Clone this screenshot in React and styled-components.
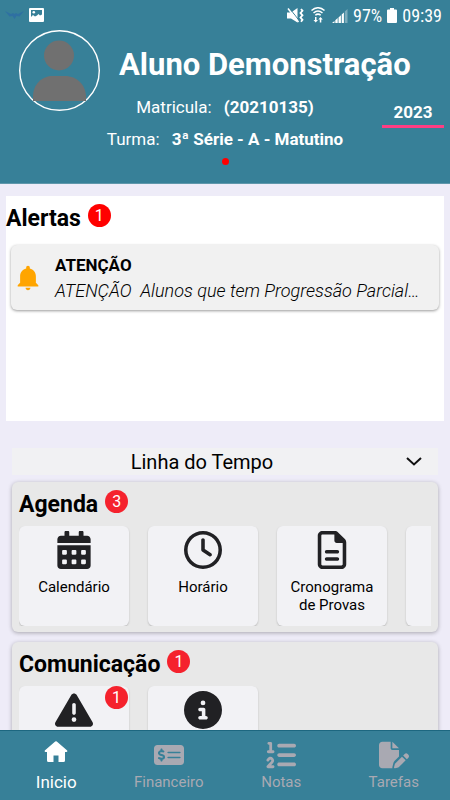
import React from "react";
import styled, { createGlobalStyle } from "styled-components";
import { FaCalendarAlt } from "react-icons/fa";
import {
  FaRegClock,
  FaRegFileLines,
  FaTriangleExclamation,
  FaCircleInfo,
  FaMoneyCheckDollar,
  FaListOl,
  FaFilePen,
} from "react-icons/fa6";
import { IoMdNotifications } from "react-icons/io";

const GlobalStyle = createGlobalStyle`
  * {
    box-sizing: border-box;
  }
  body {
    margin: 0;
    background-color: #eeecf8;
    color: #000;
    font-family: Roboto, sans-serif;
  }
  button {
    font-family: inherit;
  }
`;

const Screen = styled.div`
  height: 100vh;
  display: flex;
  flex-direction: column;
  overflow: hidden;
`;

const Header = styled.header`
  flex: none;
  background-color: #378098;
  border-bottom: 1px solid #5f97ab;
  color: white;
  padding-bottom: 18px;
`;

const StatusBar = styled.div`
  height: 30px;
  padding: 0 8px 0 5px;
  display: flex;
  align-items: center;
  justify-content: space-between;
  font-family: "Roboto Condensed", Roboto, sans-serif;
  font-size: 18px;
`;

const StatusGroup = styled.div`
  display: flex;
  align-items: center;
  gap: ${({ $gap }) => $gap}px;
`;

const Profile = styled.div`
  display: grid;
  grid-template-columns: 80px 1fr;
  column-gap: 20px;
  padding: 0 7px 0 19px;
`;

const Avatar = styled.svg`
  width: 81px;
  height: 81px;
`;

const Name = styled.h1`
  margin: 15px 0 0;
  font-size: 31px;
  line-height: 40px;
  font-weight: 700;
  white-space: nowrap;
`;

const Details = styled.div`
  display: grid;
  grid-template-columns: 62px 1fr 62px;
  margin-top: -20px;
  padding: 0 6px;
`;

const Lines = styled.div`
  grid-column: 2;
  display: flex;
  flex-direction: column;
  align-items: center;
`;

const Line = styled.p`
  margin: 0;
  font-size: 17px;
  line-height: 32px;
  font-weight: 400;
  white-space: nowrap;

  b {
    margin-left: 8px;
  }
`;

const Dot = styled.span`
  width: 7px;
  height: 7px;
  margin-top: 3px;
  border-radius: 50%;
  background-color: #f00;
`;

const YearButton = styled.button`
  align-self: start;
  margin-top: 7px;
  height: 30px;
  padding: 0;
  background: none;
  border: none;
  border-bottom: 3px solid #ff3d83;
  color: white;
  font-size: 17px;
  font-weight: 700;
`;

const Content = styled.main`
  flex: 1;
  min-height: 0;
  overflow: hidden;
  padding-top: 12px;
`;

const Alerts = styled.section`
  min-height: 225px;
  margin: 0 6px 27px;
  padding-top: 7px;
  background-color: white;
`;

const TitleRow = styled.div`
  display: flex;
  align-items: flex-start;
  gap: 7px;
`;

const Title = styled.h2`
  margin: 0;
  font-size: 23px;
  line-height: 32px;
  font-weight: 700;
`;

const Badge = styled.span`
  width: 23px;
  height: 23px;
  margin-top: 1px;
  border-radius: 50%;
  background-color: ${({ $color }) => $color || "#f5222d"};
  color: white;
  font-size: 16px;
  line-height: 23px;
  text-align: center;
`;

const AlertCard = styled.article`
  display: flex;
  align-items: center;
  gap: 12px;
  height: 65px;
  margin: 10px 5px 0;
  padding: 1px 20px 0 2px;
  border-radius: 6px;
  background-color: #f1f1f1;
  box-shadow: 0 1px 3px rgba(0, 0, 0, 0.4);
`;

const AlertText = styled.div`
  min-width: 0;
  flex: 1;
`;

const AlertTitle = styled.h3`
  margin: 0;
  font-size: 17px;
  line-height: 25px;
  font-weight: 700;
`;

const AlertBody = styled.p`
  margin: 0;
  font-size: 18px;
  line-height: 25px;
  font-style: italic;
  font-weight: 300;
  white-space: pre;
`;

const Timeline = styled.button`
  display: flex;
  align-items: center;
  width: calc(100% - 24px);
  height: 27px;
  margin: 0 12px;
  padding: 0 15px 0 0;
  background-color: #f1f1f3;
  border: none;
  color: #000;
  font-size: 20px;

  span {
    flex: 1;
    padding-right: 13px;
  }
`;

const Panel = styled.section`
  margin: 7px 12px 10px;
  padding: 7px 7px 6px;
  border-radius: 6px;
  background-color: #e8e8e8;
  box-shadow: 0 1px 4px rgba(0, 0, 0, 0.3);
`;

const Tiles = styled.div`
  display: flex;
  gap: 19px;
  margin-top: 5px;
  overflow: hidden;
`;

const Tile = styled.button`
  position: relative;
  flex: none;
  display: flex;
  flex-direction: column;
  align-items: center;
  width: 110px;
  height: 100px;
  padding: 5px 0 0;
  border: none;
  border-radius: 6px;
  background-color: #f2f2f5;
  box-shadow: 0 1px 2px rgba(0, 0, 0, 0.2);
  color: #212124;
  font-size: 15px;
  line-height: 18px;
`;

const TileLabel = styled.span`
  max-width: 90px;
  margin-top: 9px;
  color: #000;
`;

const TileBadge = styled(Badge)`
  position: absolute;
  top: 0;
  right: 1px;
  margin: 0;
`;

const TabBar = styled.nav`
  flex: none;
  display: grid;
  grid-template-columns: repeat(4, 1fr);
  height: 70px;
  background-color: #378098;
  border-top: 1px solid #1d6780;
`;

const Tab = styled.a`
  display: flex;
  flex-direction: column;
  align-items: center;
  color: ${({ $active }) => ($active ? "white" : "#a9a9b2")};
  font-size: ${({ $active }) => ($active ? 17 : 15)}px;
  line-height: 20px;
  text-decoration: none;
`;

const TabIcon = styled.span`
  display: flex;
  align-items: center;
  height: 30px;
  margin: 9px 0 2px;
`;

const BirdIcon = () => (
  <svg width="19" height="10" viewBox="0 0 19 10">
    <path
      d="M0 1 L6 4 L8 3 L9.500 4 L11 3 L13 4 L19 1 L14.500 6.500 L11.500 6 L9.500 9 L7.500 6 L4.500 6.500 Z"
      fill="#2f70a2"
    />
  </svg>
);

const ImageIcon = () => (
  <svg width="15" height="14" viewBox="0 0 15 14">
    <path
      fill="#fff"
      fillRule="evenodd"
      d="M1 0h13q1 0 1 1v12q0 1-1 1H1q-1 0-1-1V1q0-1 1-1zM2 2v7l2-2 2 1.500 2-1 1.500-1.500 1.500 1.500 2-1V2z"
    />
    <circle cx="4.800" cy="4.300" r="1.300" fill="#fff" />
  </svg>
);

const MuteIcon = () => (
  <svg width="17" height="15" viewBox="0 0 17 15">
    <path d="M0 4.500h4L10.500 0v14.500L4 10.500H0z" fill="#fff" />
    <path d="M2.300 0L12.500 13" stroke="#378098" strokeWidth="1" />
    <path d="M1 .5L11.500 14" stroke="#fff" strokeWidth="1.500" />
    <path
      d="M14 1l1.500 1.800-2 2.200 2 2.300-2 2.200 2 2.300-1.500 2"
      fill="none"
      stroke="#fff"
      strokeWidth="1.800"
    />
  </svg>
);

const WifiIcon = () => (
  <svg width="14" height="16" viewBox="0 0 14 16">
    <g fill="none" stroke="#fff" strokeWidth="1.500">
      <path d="M.5 3.500Q7-2 13.500 3.500" />
      <path d="M2.500 6Q7 2 11.500 6" />
      <path d="M4.300 8.300Q7 6 9.700 8.300" />
    </g>
    <path
      fill="#fff"
      d="M4 10h1.500v3H7l-2.300 2.500L2.500 13H4zM8.800 15.500v-3H7.300L9.500 10l2.300 2.500h-1.500v3z"
    />
  </svg>
);

const SignalIcon = () => (
  <svg width="16" height="15" viewBox="0 0 16 15">
    <path
      d="M0 15l2.500-2v2zM3.300 12.300l2.400-2.200V15H3.300zM6.500 9.400l2.400-2.200V15H6.500zM9.700 6.500l2.200-2V15H9.700z"
      fill="#fff"
    />
    <path d="M12.800 3.500L15.500 1v14h-2.700z" fill="#fff" opacity="0.35" />
  </svg>
);

const BatteryIcon = () => (
  <svg width="10" height="15" viewBox="0 0 10 15">
    <path d="M3 0h4v1.500h2q1 0 1 1V14q0 1-1 1H1q-1 0-1-1V2.500q0-1 1-1h2z" fill="#fff" />
  </svg>
);

const HomeIcon = () => (
  <svg width="24" height="30" viewBox="0 3 24 30">
    <path
      d="M11.200 4.500Q12 3.800 12.800 4.500L23.200 13.500Q23.900 14.700 22.500 15H21V23.500Q21 25 19.500 25H14.500V18.500H9.500V25H4.500Q3 25 3 23.500V15H1.500Q.1 14.700 .8 13.500Z"
      fill="currentColor"
    />
  </svg>
);

const tabs = [
  { label: "Inicio", icon: <HomeIcon />, active: true },
  { label: "Financeiro", icon: <FaMoneyCheckDollar size={30} /> },
  { label: "Notas", icon: <FaListOl size={30} /> },
  { label: "Tarefas", icon: <FaFilePen size={30} /> },
];

const agenda = [
  { label: "Calendário", icon: <FaCalendarAlt size={38} /> },
  { label: "Horário", icon: <FaRegClock size={38} /> },
  { label: "Cronograma de Provas", icon: <FaRegFileLines size={38} /> },
  { label: "", icon: null },
];

const comunicacao = [
  { icon: <FaTriangleExclamation size={38} />, badge: 1 },
  { icon: <FaCircleInfo size={38} /> },
];

const TilePanel = ({ title, count, items }) => (
  <Panel>
    <TitleRow>
      <Title>{title}</Title>
      <Badge>{count}</Badge>
    </TitleRow>
    <Tiles>
      {items.map((item, i) => (
        <Tile key={i}>
          {item.icon}
          {item.label && <TileLabel>{item.label}</TileLabel>}
          {item.badge && <TileBadge>{item.badge}</TileBadge>}
        </Tile>
      ))}
    </Tiles>
  </Panel>
);

const App = () => (
  <Screen>
    <GlobalStyle />
    <Header>
      <StatusBar>
        <StatusGroup $gap={5}>
          <BirdIcon />
          <ImageIcon />
        </StatusGroup>
        <StatusGroup $gap={5}>
          <StatusGroup $gap={7}>
            <MuteIcon />
            <WifiIcon />
            <SignalIcon />
          </StatusGroup>
          <span>97%</span>
          <BatteryIcon />
          <span>09:39</span>
        </StatusGroup>
      </StatusBar>
      <Profile>
        <Avatar viewBox="0 0 81 81">
          <circle cx="40.500" cy="40.500" r="39.800" fill="none" stroke="#fff" strokeWidth="1.400" />
          <circle cx="40" cy="25.500" r="15" fill="#707070" />
          <path d="M14 71V67C14 54 23 46 34 46H46C58 46 67 55 67 67V71Z" fill="#707070" />
        </Avatar>
        <Name>Aluno Demonstração</Name>
      </Profile>
      <Details>
        <Lines>
          <Line>
            Matricula: <b>(20210135)</b>
          </Line>
          <Line>
            Turma: <b>3ª Série - A - Matutino</b>
          </Line>
          <Dot />
        </Lines>
        <YearButton>2023</YearButton>
      </Details>
    </Header>
    <Content>
      <Alerts>
        <TitleRow>
          <Title>Alertas</Title>
          <Badge $color="#f00">1</Badge>
        </TitleRow>
        <AlertCard>
          <IoMdNotifications size={30} color="#ffa500" />
          <AlertText>
            <AlertTitle>ATENÇÃO</AlertTitle>
            <AlertBody>{"ATENÇÃO  Alunos que tem Progressão Parcial…"}</AlertBody>
          </AlertText>
        </AlertCard>
      </Alerts>
      <Timeline>
        <span>Linha do Tempo</span>
        <svg width="18" height="10" viewBox="0 0 18 10">
          <path d="M2 1L9 7.500L16 1" fill="none" stroke="#111" strokeWidth="2" />
        </svg>
      </Timeline>
      <TilePanel title="Agenda" count={3} items={agenda} />
      <TilePanel title="Comunicação" count={1} items={comunicacao} />
    </Content>
    <TabBar>
      {tabs.map((tab) => (
        <Tab key={tab.label} href="#" $active={tab.active}>
          <TabIcon>{tab.icon}</TabIcon>
          {tab.label}
        </Tab>
      ))}
    </TabBar>
  </Screen>
);

export default App;
